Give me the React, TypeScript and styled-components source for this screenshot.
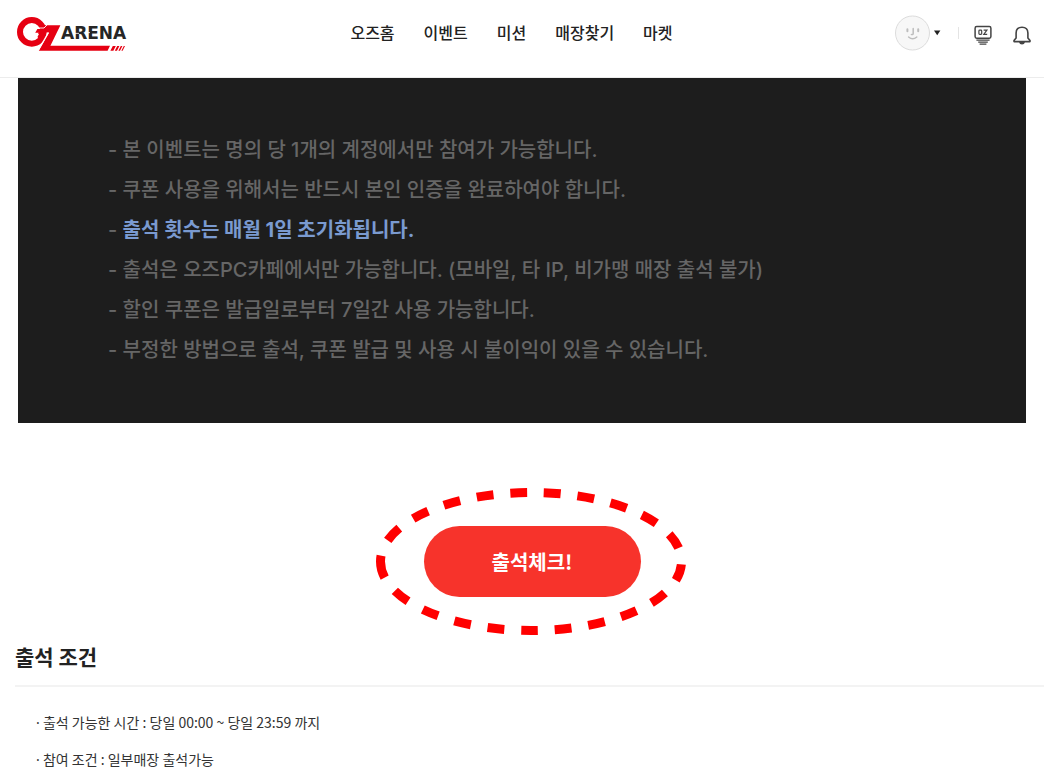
import React from "react";
import styled, { createGlobalStyle } from "styled-components";

const GlobalStyle = createGlobalStyle`
  * { box-sizing: border-box; }
  body {
    margin: 0;
    background: #fff;
    color: #222;
    font-family: "Noto Sans CJK KR", "Noto Sans", sans-serif;
    overflow-x: hidden;
  }
  button { font-family: inherit; border: 0; padding: 0; background: none; cursor: pointer; }
  a { color: inherit; text-decoration: none; }
  ul { list-style: none; margin: 0; padding: 0; }
  svg { display: block; }
`;

const Header = styled.header`
  display: flex;
  align-items: flex-start;
  justify-content: space-between;
  height: 78px;
  padding: 14px 12px 0 16px;
  border-bottom: 1px solid #ececec;
`;

const Nav = styled.nav`
  display: flex;
  gap: 29px;
  padding-top: 6px;
`;

const NavLink = styled.a`
  font-size: 16px;
  line-height: 24px;
  font-weight: 500;
  color: #222;
`;

const Tools = styled.div`
  display: flex;
  align-items: center;
  height: 38px;
`;

const ProfileButton = styled.button`
  display: flex;
  align-items: center;
  gap: 3px;
`;

const Separator = styled.span`
  width: 1px;
  height: 12px;
  margin: 0 15px 0 16px;
  background: #e4e4e4;
`;

const IconButton = styled.button`
  margin-top: 4px;
  & + & { margin-left: 20px; }
`;

const Notice = styled.section`
  margin: 0 18px;
  padding: 52px 90px 53px;
  background: #1d1d1d;
`;

const NoticeItem = styled.li`
  font-family: Inter, "Noto Sans CJK KR", sans-serif;
  font-size: 20px;
  line-height: 40px;
  font-weight: 500;
  color: #666;
  strong { font-weight: 700; color: #7a9ad0; }
`;

const CheckArea = styled.section`
  display: flex;
  justify-content: center;
  padding: 103px 0 0 20px;
`;

const CheckWrap = styled.div`
  position: relative;
`;

const CheckButton = styled.button`
  display: block;
  width: 217px;
  height: 71px;
  border-radius: 36px;
  background: #f7332b;
  color: #fff;
  font-size: 20px;
  font-weight: 700;
  line-height: 32px;
`;

const Highlight = styled.svg`
  position: absolute;
  left: -49px;
  top: -39px;
  pointer-events: none;
`;

const Conditions = styled.section`
  padding: 43px 0 6px 15px;
`;

const ConditionsTitle = styled.h2`
  margin: 0;
  padding-bottom: 13px;
  border-bottom: 2px solid #f3f3f3;
  font-size: 21px;
  line-height: 32px;
  font-weight: 700;
  color: #222;
`;

const ConditionList = styled.ul`
  padding: 17px 0 0 21px;
`;

const ConditionItem = styled.li`
  font-size: 14px;
  line-height: 37px;
  color: #333;
`;

const Bullet = styled.span`
  font-family: "Noto Sans", sans-serif;
`;

const Logo = () => (
  <svg width="112" height="40" viewBox="16 14 112 40" role="img" aria-label="OZ ARENA">
    <circle cx="31.8" cy="31.9" r="11.8" fill="none" stroke="#e60012" strokeWidth="6" />
    <path d="M44.5 25.2 H60.4 L50.4 45.8 H110 L107.6 50.8 H38.8 L49 32.4 H46 L41 41.6 L37 36.4 L38.6 32.8 H35.2 L37.4 29 H44 Z" fill="#e60012" />
    <path d="M39 34 L36.6 38.4 L34 34 Z" fill="#fff" />
    <path d="M48.4 32.6 L38.4 50" stroke="#fff" strokeWidth="1.3" />
    <path d="M36.4 28 H44 L47.4 24.6" stroke="#fff" strokeWidth="0.9" fill="none" />
    <path d="M112.8 46 H115.8 L113.4 50.8 H110.4Z M117.2 46 H119.4 L117 50.8 H114.8Z M120.8 46 H122.4 L120 50.8 H118.4Z M123.8 46 H125 L122.6 50.8 H121.4Z" fill="#e60012" />
    <text x="61" y="39" fontFamily="DejaVu Sans" fontWeight="700" fontSize="17" fill="#262626">ARENA</text>
    <path d="M74.6 33.4 H79 M87 32.6 H90" stroke="#fff" strokeWidth="0.8" />
  </svg>
);

const navItems = ["오즈홈", "이벤트", "미션", "매장찾기", "마켓"];

const notices: { text: string; strong?: boolean }[] = [
  { text: "본 이벤트는 명의 당 1개의 계정에서만 참여가 가능합니다." },
  { text: "쿠폰 사용을 위해서는 반드시 본인 인증을 완료하여야 합니다." },
  { text: "출석 횟수는 매월 1일 초기화됩니다.", strong: true },
  { text: "출석은 오즈PC카페에서만 가능합니다. (모바일, 타 IP, 비가맹 매장 출석 불가)" },
  { text: "할인 쿠폰은 발급일로부터 7일간 사용 가능합니다." },
  { text: "부정한 방법으로 출석, 쿠폰 발급 및 사용 시 불이익이 있을 수 있습니다." },
];

const conditions = [
  "출석 가능한 시간 : 당일 00:00 ~ 당일 23:59 까지",
  "참여 조건 : 일부매장 출석가능",
];

export default function App() {
  return (
    <>
      <GlobalStyle />
      <Header>
        <a href="#home"><Logo /></a>
        <Nav>
          {navItems.map((item) => (
            <NavLink href="#" key={item}>{item}</NavLink>
          ))}
        </Nav>
        <Tools>
          <ProfileButton aria-label="내 프로필">
            <svg width="36" height="36" viewBox="0 0 36 36" fill="none">
              <circle cx="17.5" cy="18" r="17" fill="#f7f7f7" stroke="#dcdcdc" />
              <g stroke="#bdbdbd" strokeWidth="1.5" strokeLinecap="round">
                <path d="M12.4 14.2 V16.2 M23.2 14.2 V16.2" strokeWidth="2" />
                <path d="M18.2 13.6 V18.4 Q18.2 19.8 16.4 19.6" />
                <path d="M13.6 22 Q17.6 25.6 21.8 22" />
              </g>
            </svg>
            <svg width="8" height="6" viewBox="0 0 8 6"><path d="M0 0.6 H6.4 L3.2 5.2Z" fill="#222" /></svg>
          </ProfileButton>
          <Separator />
          <IconButton aria-label="오즈 PC">
            <svg width="18" height="20" viewBox="0 0 18 20" fill="none" stroke="#444">
              <rect x="1.1" y="1.6" width="15.8" height="11.6" rx="1.6" strokeWidth="1.5" />
              <path d="M5.3 5.2 H6.9 Q7.7 5.2 7.7 6 V8.6 Q7.7 9.4 6.9 9.4 H5.7 Q4.9 9.4 4.9 8.6 V6 Q4.9 5.2 5.7 5.2 M9.6 5.2 H12.9 L9.8 9.4 H13.2" strokeWidth="1.2" />
              <path d="M2.4 15.1 H15.6 M4.2 17.1 H13.8 M5.6 19.1 H12.4" strokeWidth="1.1" />
            </svg>
          </IconButton>
          <IconButton aria-label="알림">
            <svg width="20" height="20" viewBox="0 0 20 20" fill="none" stroke="#444" strokeWidth="1.6" strokeLinejoin="round">
              <path d="M2 16.6 H18 V15.6 L15.9 13 V8 Q15.9 2.2 10 2.2 Q4.1 2.2 4.1 8 V13 L2 15.6 Z" />
              <path d="M7 17 Q7.6 19.6 10 19.6 Q12.4 19.6 13 17Z" fill="#444" stroke="none" />
            </svg>
          </IconButton>
        </Tools>
      </Header>
      <main>
        <Notice>
          <ul>
            {notices.map(({ text, strong }) => (
              <NoticeItem key={text}>- {strong ? <strong>{text}</strong> : text}</NoticeItem>
            ))}
          </ul>
        </Notice>
        <CheckArea>
          <CheckWrap>
            <CheckButton>출석체크!</CheckButton>
            <Highlight width="312" height="149" viewBox="0 0 312 149" fill="none" aria-hidden="true">
              <path
                d="M5.5 74.5 A150.5 69 0 0 0 306.5 74.5 A150.5 69 0 0 0 5.5 74.5"
                stroke="#ff0000"
                strokeWidth="9"
                pathLength="720"
                strokeDasharray="17 17"
              />
            </Highlight>
          </CheckWrap>
        </CheckArea>
        <Conditions>
          <ConditionsTitle>출석 조건</ConditionsTitle>
          <ConditionList>
            {conditions.map((item) => (
              <ConditionItem key={item}><Bullet>·</Bullet> {item}</ConditionItem>
            ))}
          </ConditionList>
        </Conditions>
      </main>
    </>
  );
}
